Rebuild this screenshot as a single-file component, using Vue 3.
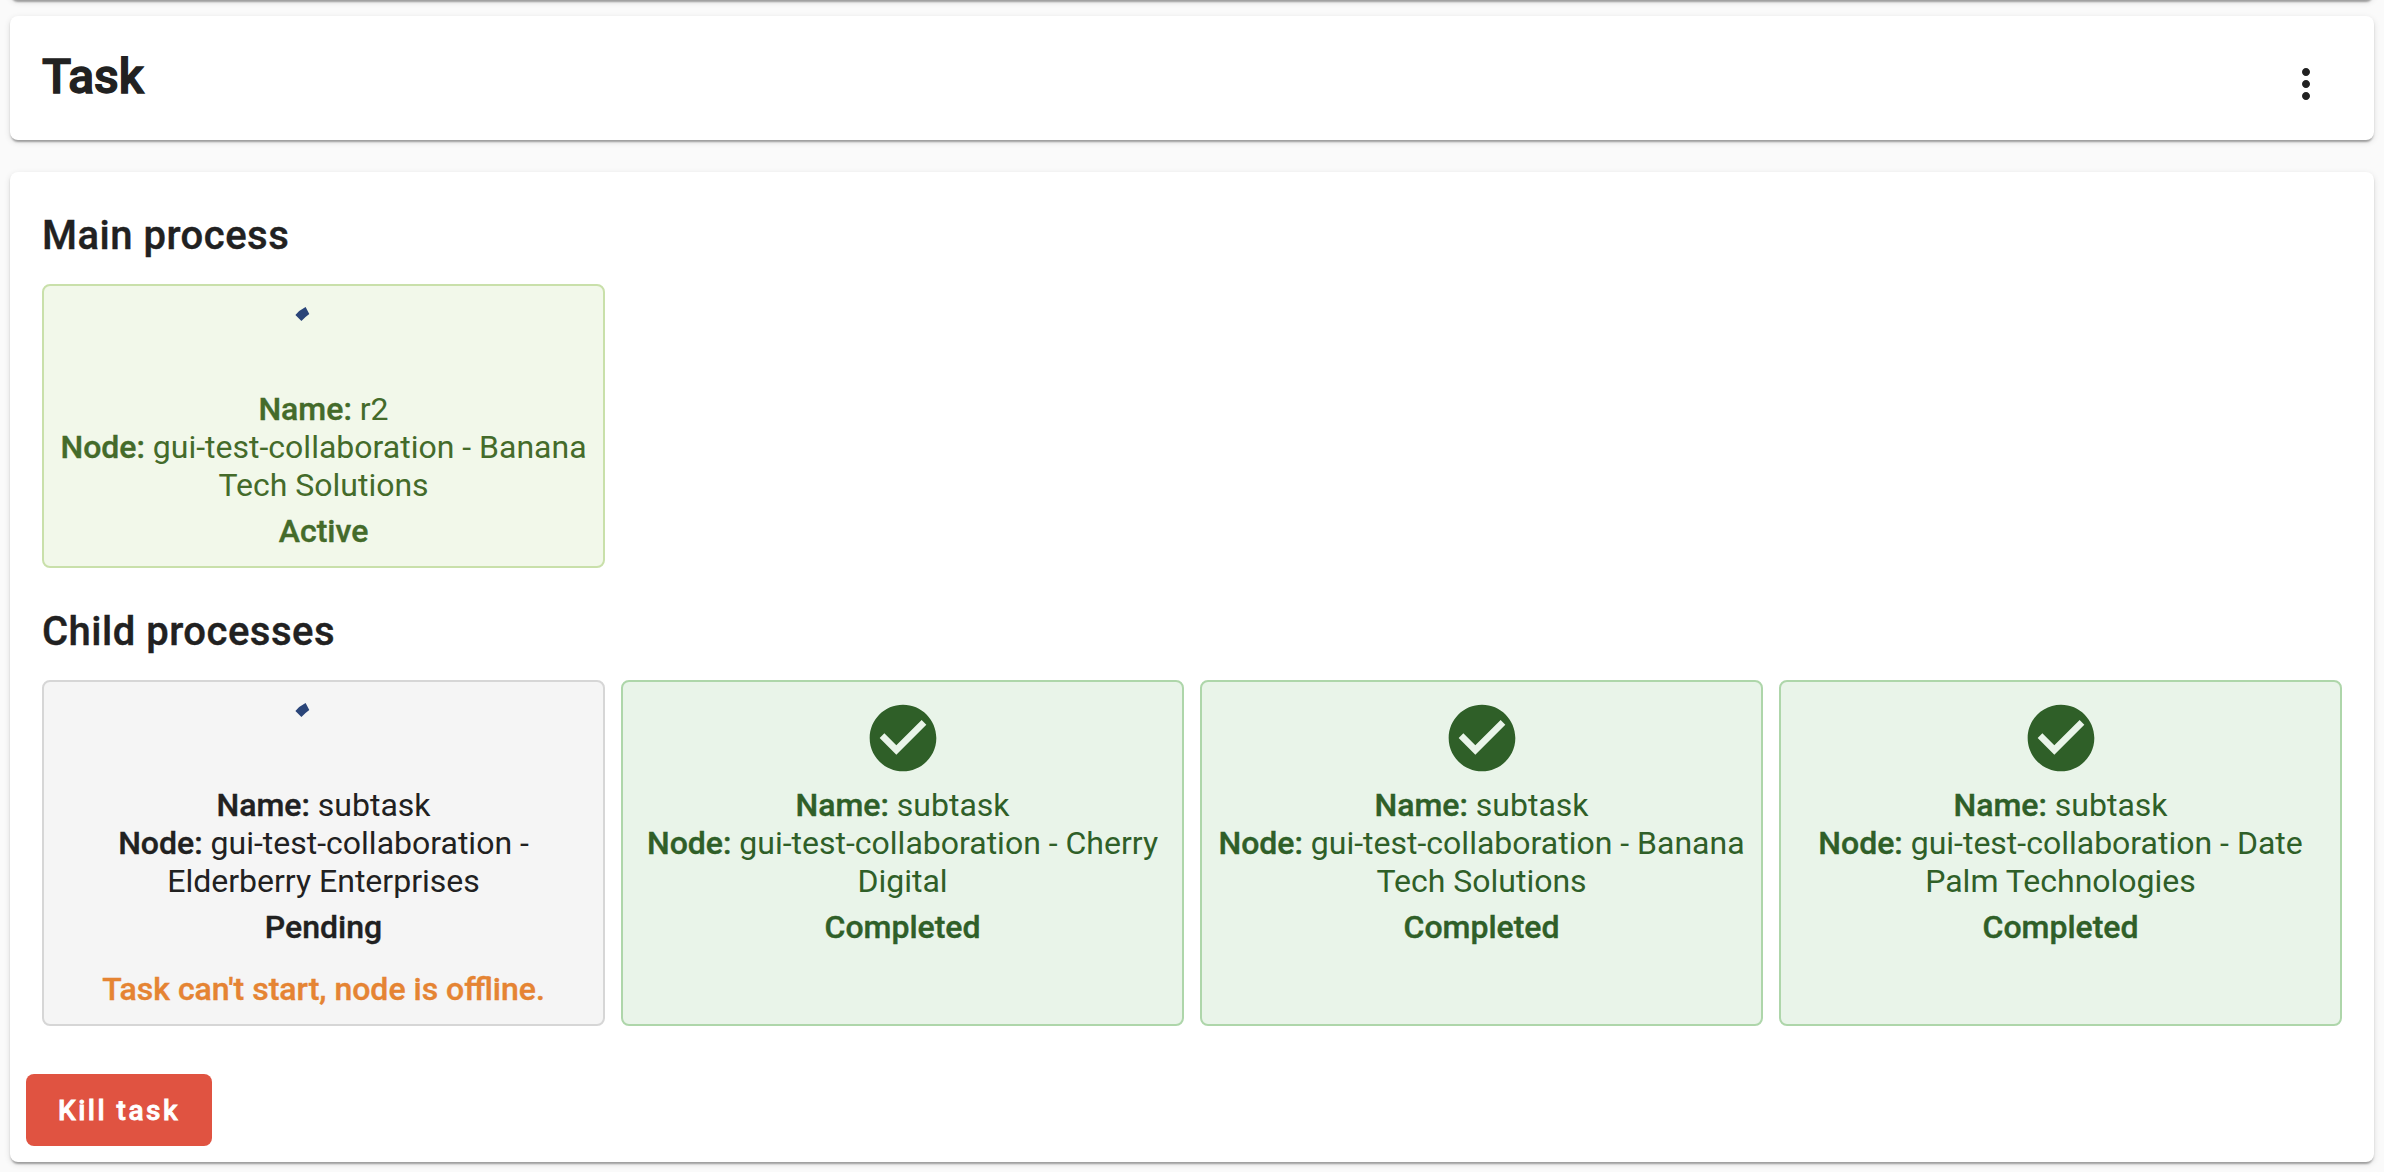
<script setup>
const collaboration = 'gui-test-collaboration'
const mainProcesses = [
  { name: 'r2', node: `${collaboration} - Banana Tech Solutions`, status: 'Active' },
]
const childProcesses = [
  {
    name: 'subtask',
    node: `${collaboration} - Elderberry Enterprises`,
    status: 'Pending',
    warning: "Task can't start, node is offline.",
  },
  { name: 'subtask', node: `${collaboration} - Cherry Digital`, status: 'Completed' },
  { name: 'subtask', node: `${collaboration} - Banana Tech Solutions`, status: 'Completed' },
  { name: 'subtask', node: `${collaboration} - Date Palm Technologies`, status: 'Completed' },
]
const sections = [
  { title: 'Main process', items: mainProcesses },
  { title: 'Child processes', items: childProcesses },
]
</script>

<template>
  <main class="page">
    <div class="card card-previous"></div>

    <header class="card card-header">
      <h1>Task</h1>
      <button class="menu" aria-label="Menu">
        <svg viewBox="0 0 24 24" width="48" height="48" fill="currentColor">
          <path d="M12 8c1.1 0 2-.9 2-2s-.9-2-2-2-2 .9-2 2 .9 2 2 2zm0 2c-1.1 0-2 .9-2 2s.9 2 2 2 2-.9 2-2-.9-2-2-2zm0 6c-1.1 0-2 .9-2 2s.9 2 2 2 2-.9 2-2-.9-2-2-2z" />
        </svg>
      </button>
    </header>

    <section class="card card-body">
      <div class="sections">
        <section v-for="s in sections" :key="s.title" class="section">
          <h2>{{ s.title }}</h2>
          <div class="grid">
            <article
              v-for="(p, i) in s.items"
              :key="i"
              class="process"
              :class="p.status.toLowerCase()"
            >
              <svg v-if="p.status === 'Completed'" class="icon" viewBox="0 0 24 24" fill="currentColor">
                <path d="M12 2C6.48 2 2 6.48 2 12s4.48 10 10 10 10-4.48 10-10S17.52 2 12 2zm-2 15l-5-5 1.41-1.41L10 14.17l7.59-7.59L19 8l-9 9z" />
              </svg>
              <svg v-else class="icon" viewBox="0 0 80 80">
                <path class="spinner" d="M11.4 12.9Q15 8.2 21.6 4.9L25.3 11.9Q21.3 14.7 17.4 19.1Z" />
              </svg>
              <div class="details">
                <div><b>Name:</b> {{ p.name }}</div>
                <div><b>Node:</b> {{ p.node }}</div>
              </div>
              <div class="status">{{ p.status }}</div>
              <div v-if="p.warning" class="warning">{{ p.warning }}</div>
            </article>
          </div>
        </section>
      </div>
      <div class="actions">
        <button class="kill">Kill task</button>
      </div>
    </section>
  </main>
</template>

<style>
html,
body {
  background: #fafafa;
}
</style>

<style scoped>
.page {
  box-sizing: border-box;
  height: 1172px;
  padding: 0 10px;
  overflow: hidden;
  background: #fafafa;
  color: #212121;
  font-family: Roboto, sans-serif;
  font-size: 32px;
  line-height: 38px;
}
.card {
  box-sizing: border-box;
  border-radius: 8px;
  background: #fff;
  box-shadow:
    0 4px 2px -2px rgba(0, 0, 0, 0.2),
    0 2px 2px 0 rgba(0, 0, 0, 0.14),
    0 2px 6px 0 rgba(0, 0, 0, 0.12);
}
.card-previous {
  height: 32px;
  margin-top: -32px;
}
.card-header {
  display: flex;
  justify-content: space-between;
  height: 124px;
  margin-top: 16px;
  padding: 29px 44px 31px 32px;
}
h1,
h2 {
  margin: 0;
}
h1 {
  font-size: 48px;
  font-weight: 500;
  line-height: 64px;
  -webkit-text-stroke: 1.3px currentColor;
}
h2 {
  margin-bottom: 16px;
  font-size: 40px;
  font-weight: 500;
  line-height: 64px;
  letter-spacing: 0.5px;
  -webkit-text-stroke: 0.4px currentColor;
}
button {
  border: 0;
  font-family: inherit;
}
.menu {
  display: flex;
  align-self: flex-start;
  margin-top: 15px;
  padding: 0;
  background: none;
  color: #212121;
}
.card-body {
  height: 990px;
  margin-top: 32px;
}
.sections {
  display: flex;
  flex-direction: column;
  gap: 32px;
  padding: 32px;
}
.grid {
  display: grid;
  grid-template-columns: repeat(4, 1fr);
  gap: 16px;
}
.process {
  display: flex;
  flex-direction: column;
  align-items: center;
  padding: 16px;
  border: 2px solid;
  border-radius: 8px;
  text-align: center;
}
.active {
  border-color: #c9e0aa;
  background: #f2f8ea;
  color: #446b2a;
}
.pending {
  border-color: #d6d6d6;
  background: #f5f5f5;
}
.completed {
  border-color: #aed6aa;
  background: #e9f4e9;
  color: #2f5f28;
}
.icon {
  width: 80px;
  height: 80px;
  margin-bottom: 8px;
}
.spinner {
  fill: #2a4579;
}
b,
.status,
.warning {
  font-weight: 500;
  -webkit-text-stroke: 0.4px currentColor;
}
.status {
  margin-top: 8px;
}
.warning {
  margin-top: 24px;
  color: #e58433;
}
.actions {
  padding: 16px;
}
.kill {
  display: block;
  height: 72px;
  padding: 1px 32px 0;
  border-radius: 8px;
  background: #e05341;
  color: #fff;
  font-size: 28px;
  font-weight: 500;
  line-height: 71px;
  letter-spacing: 2.5px;
  -webkit-text-stroke: 0.8px currentColor;
}
</style>
